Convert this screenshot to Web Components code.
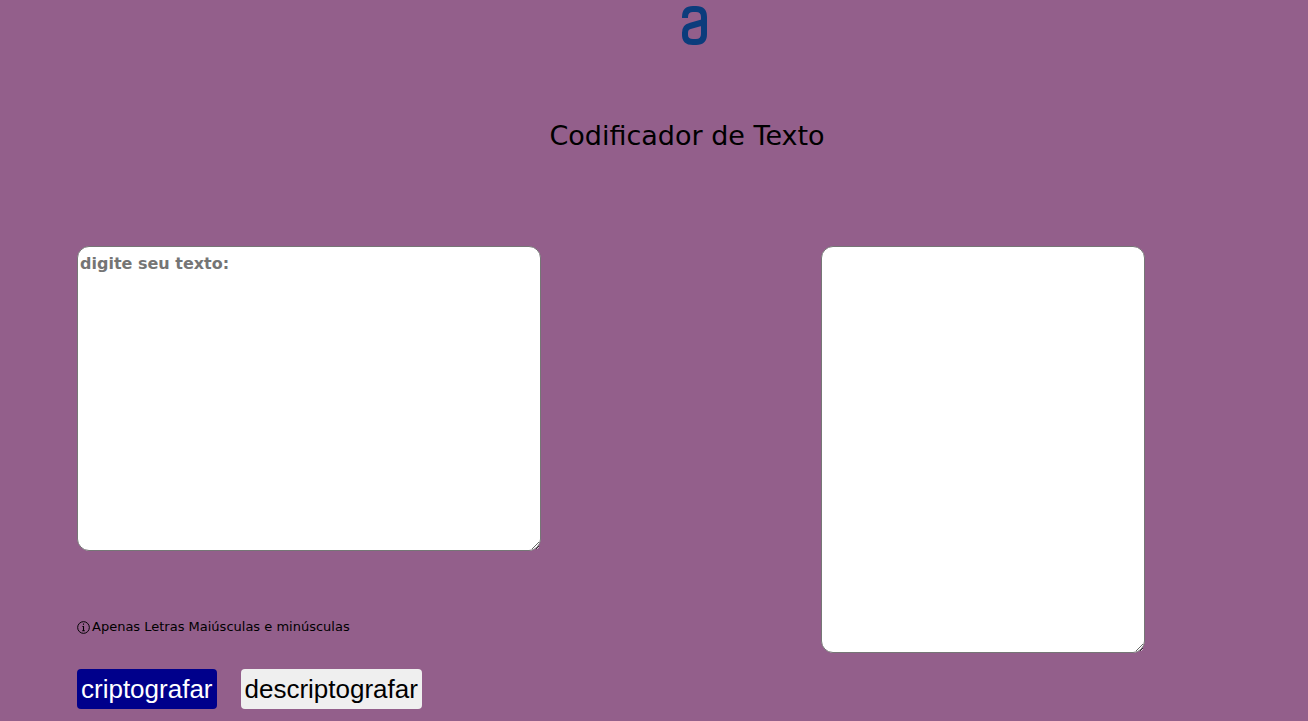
<!DOCTYPE html>
<html lang="pt-BR">
<head>
<meta charset="utf-8">
<meta name="viewport" content="width=device-width, initial-scale=1">
<title>Codificador de Texto</title>
<style>
  body { margin: 0; background: #935f8b; color: #000; font-family: "DejaVu Sans", sans-serif; }
</style>
</head>
<body>
<codificador-app></codificador-app>
<script>
  class Base extends HTMLElement {
    constructor() {
      super();
      this.attachShadow({ mode: 'open' }).innerHTML = this.view();
    }
  }

  customElements.define('app-header', class extends Base {
    view() {
      return `
        <style>
          :host { display: block; }
          header { display: flex; flex-direction: column; align-items: center; padding-top: 6px; gap: 72px; }
          svg { display: block; width: 26px; height: 40px; margin-left: 80px; }
          h1 { margin: 0 0 0 66px; font-size: 27px; line-height: 36px; font-weight: 400; white-space: nowrap; }
        </style>
        <header>
          <svg viewBox="0 0 26 40" role="img" aria-label="Logo" fill="none" stroke="#0b3c7c" stroke-width="6">
            <path d="M4 12V11Q4 3 12 3H15Q23 3 23 11V28Q23 36 15 36H12Q4 36 4 29V27Q4 21 9 20L23 16"/>
          </svg>
          <h1><slot></slot></h1>
        </header>`;
    }
  });

  customElements.define('text-panel', class extends Base {
    static observedAttributes = ['placeholder', 'label'];
    view() {
      return `
        <style>
          :host { display: block; }
          textarea {
            display: block; box-sizing: border-box; width: 100%; height: var(--panel-height, 305px);
            margin: 0; padding: 7px 2px; border: 1px solid #767676; border-radius: 12px;
            background: #fff; color: #000; outline: none;
            font: bold 16px/20px "DejaVu Sans", sans-serif;
          }
          textarea::placeholder { color: #757575; }
        </style>
        <textarea></textarea>`;
    }
    attributeChangedCallback(name, old, value) {
      this.shadowRoot.querySelector('textarea').setAttribute(name === 'label' ? 'aria-label' : name, value);
    }
  });

  customElements.define('info-note', class extends Base {
    view() {
      return `
        <style>
          :host { display: block; }
          p { display: flex; align-items: center; gap: 2px; margin: 0; font-size: 13px; line-height: 16px; white-space: nowrap; }
          svg { flex: none; width: 13px; height: 13px; }
        </style>
        <p>
          <svg viewBox="0 0 12 12" fill="none" stroke="#000" aria-hidden="true">
            <circle cx="6" cy="6" r="5.4" stroke-width=".9"/>
            <path d="M6 2.2v1.2M5 5h1v4M4.8 9h2.4" stroke-width="1"/>
          </svg>
          <span><slot></slot></span>
        </p>`;
    }
  });

  customElements.define('action-button', class extends Base {
    view() {
      return `
        <style>
          :host { display: block; }
          button {
            display: block; height: 40px; margin: 0; padding: 0 4px; border: 0; border-radius: 4px;
            background: #efefef; color: #000; font: 26px/40px "Liberation Sans", Arial, sans-serif;
            white-space: nowrap; cursor: pointer;
          }
          :host([primary]) button { background: #00008b; color: #fff; }
        </style>
        <button type="button"><slot></slot></button>`;
    }
  });

  customElements.define('codificador-app', class extends Base {
    view() {
      return `
        <style>
          :host { display: block; }
          main {
            display: grid; grid-template-columns: 463fr 324fr; column-gap: 280px;
            align-items: start; margin-top: 92px; padding: 0 163px 12px 77px;
          }
          .output { --panel-height: 407px; }
          info-note { margin-top: 68px; }
          .actions { display: flex; gap: 24px; margin-top: 34px; }
        </style>
        <app-header>Codificador de Texto</app-header>
        <main>
          <section>
            <text-panel label="Texto de entrada" placeholder="digite seu texto:"></text-panel>
            <info-note>Apenas Letras Maiúsculas e minúsculas</info-note>
            <div class="actions">
              <action-button primary>criptografar</action-button>
              <action-button>descriptografar</action-button>
            </div>
          </section>
          <text-panel class="output" label="Resultado"></text-panel>
        </main>`;
    }
  });
</script>
</body>
</html>
